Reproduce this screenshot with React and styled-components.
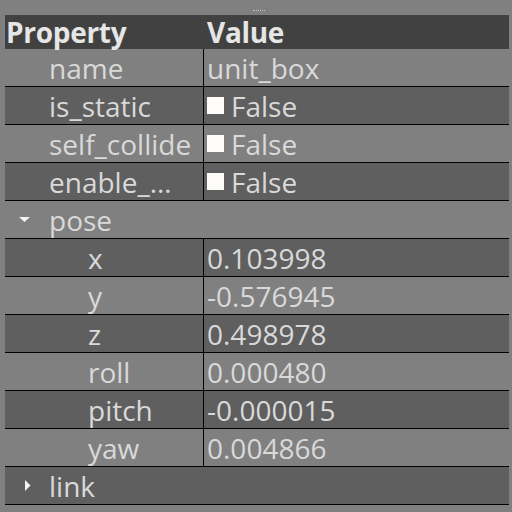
import React from 'react'
import styled, { createGlobalStyle } from 'styled-components'

const GlobalStyle = createGlobalStyle`
  html, body {
    margin: 0;
    padding: 0;
    background: #808080;
  }
  body {
    font-family: 'Open Sans', 'Noto Sans', sans-serif;
  }
`

const rows = [
  { name: 'name', value: 'unit_box', level: 0 },
  { name: 'is_static', value: 'False', check: true, level: 0 },
  { name: 'self_collide', value: 'False', check: true, level: 0 },
  { name: 'enable_…', value: 'False', check: true, level: 0 },
  { name: 'pose', group: 'open', level: 0 },
  { name: 'x', value: '0.103998', level: 1 },
  { name: 'y', value: '-0.576945', level: 1 },
  { name: 'z', value: '0.498978', level: 1 },
  { name: 'roll', value: '0.000480', level: 1 },
  { name: 'pitch', value: '-0.000015', level: 1 },
  { name: 'yaw', value: '0.004866', level: 1 },
  { name: 'link', group: 'closed', level: 0 },
]

const Arrow = ({ open }) => (
  <ArrowBox $open={open}>
    {open ? (
      <svg width='11' height='7' viewBox='0 0 11 7'>
        <polygon points='0,1 11,1 5.5,6' fill='#f4f4f4' />
      </svg>
    ) : (
      <svg width='6' height='11' viewBox='0 0 6 11'>
        <polygon points='0,0 5.5,5.5 0,11' fill='#f4f4f4' />
      </svg>
    )}
  </ArrowBox>
)

const App = () => {
  return (
    <Page>
      <GlobalStyle />
      <Handle>
        <Dots />
      </Handle>
      <Table>
        <Header>
          <HeadCell>Property</HeadCell>
          <HeadCell $value>Value</HeadCell>
        </Header>
        {rows.map((r, i) => (
          <Row key={r.name} $dark={i % 2 === 1}>
            {r.group ? (
              <GroupCell>
                <Arrow open={r.group === 'open'} />
                {r.name}
              </GroupCell>
            ) : (
              <>
                <NameCell $level={r.level}>{r.name}</NameCell>
                <ValueCell>
                  {r.check && <Check />}
                  {r.value}
                </ValueCell>
              </>
            )}
          </Row>
        ))}
      </Table>
    </Page>
  )
}

const Page = styled.div`
  width: 512px;
  height: 512px;
  background: #808080;
  overflow: hidden;
  color: #d9d9d9;
`

const Handle = styled.div`
  height: 15px;
  display: flex;
  justify-content: center;
  align-items: flex-start;
  padding-left: 6px;
  box-sizing: border-box;
`

const Dots = styled.div`
  margin-top: 10px;
  width: 12px;
  height: 0;
  border-top: 1px dotted #c4c4c4;
`

const Table = styled.div`
  margin-left: 5px;
  width: 504px;
`

const Header = styled.div`
  height: 34px;
  display: flex;
  align-items: center;
  background: #414141;
`

const HeadCell = styled.div`
  font-weight: 700;
  font-size: 28px;
  color: #e6e6e6;
  width: ${(p) => (p.$value ? 'auto' : '200px')};
  padding-left: 1px;
  letter-spacing: -0.3px;
`

const Row = styled.div`
  height: 37px;
  display: flex;
  background: ${(p) => (p.$dark ? '#5f5f5f' : '#808080')};
  border-bottom: 1px solid #000;
  font-size: 28px;
`

const NameCell = styled.div`
  width: 199px;
  box-sizing: border-box;
  border-right: 1px solid #000;
  display: flex;
  align-items: center;
  padding-left: ${(p) => (p.$level ? 83 : 44)}px;
  white-space: nowrap;
  overflow: hidden;
`

const ValueCell = styled.div`
  flex: 1;
  display: flex;
  align-items: center;
  padding-left: 3px;
  white-space: nowrap;
`

const GroupCell = styled.div`
  flex: 1;
  display: flex;
  align-items: center;
`

const ArrowBox = styled.span`
  width: 44px;
  box-sizing: border-box;
  padding-left: ${(p) => (p.$open ? 14 : 20)}px;
  display: flex;
  align-items: center;
`

const Check = styled.span`
  width: 17px;
  height: 17px;
  background: #fdfcf8;
  margin-right: 7px;
  flex: none;
`

export default App
